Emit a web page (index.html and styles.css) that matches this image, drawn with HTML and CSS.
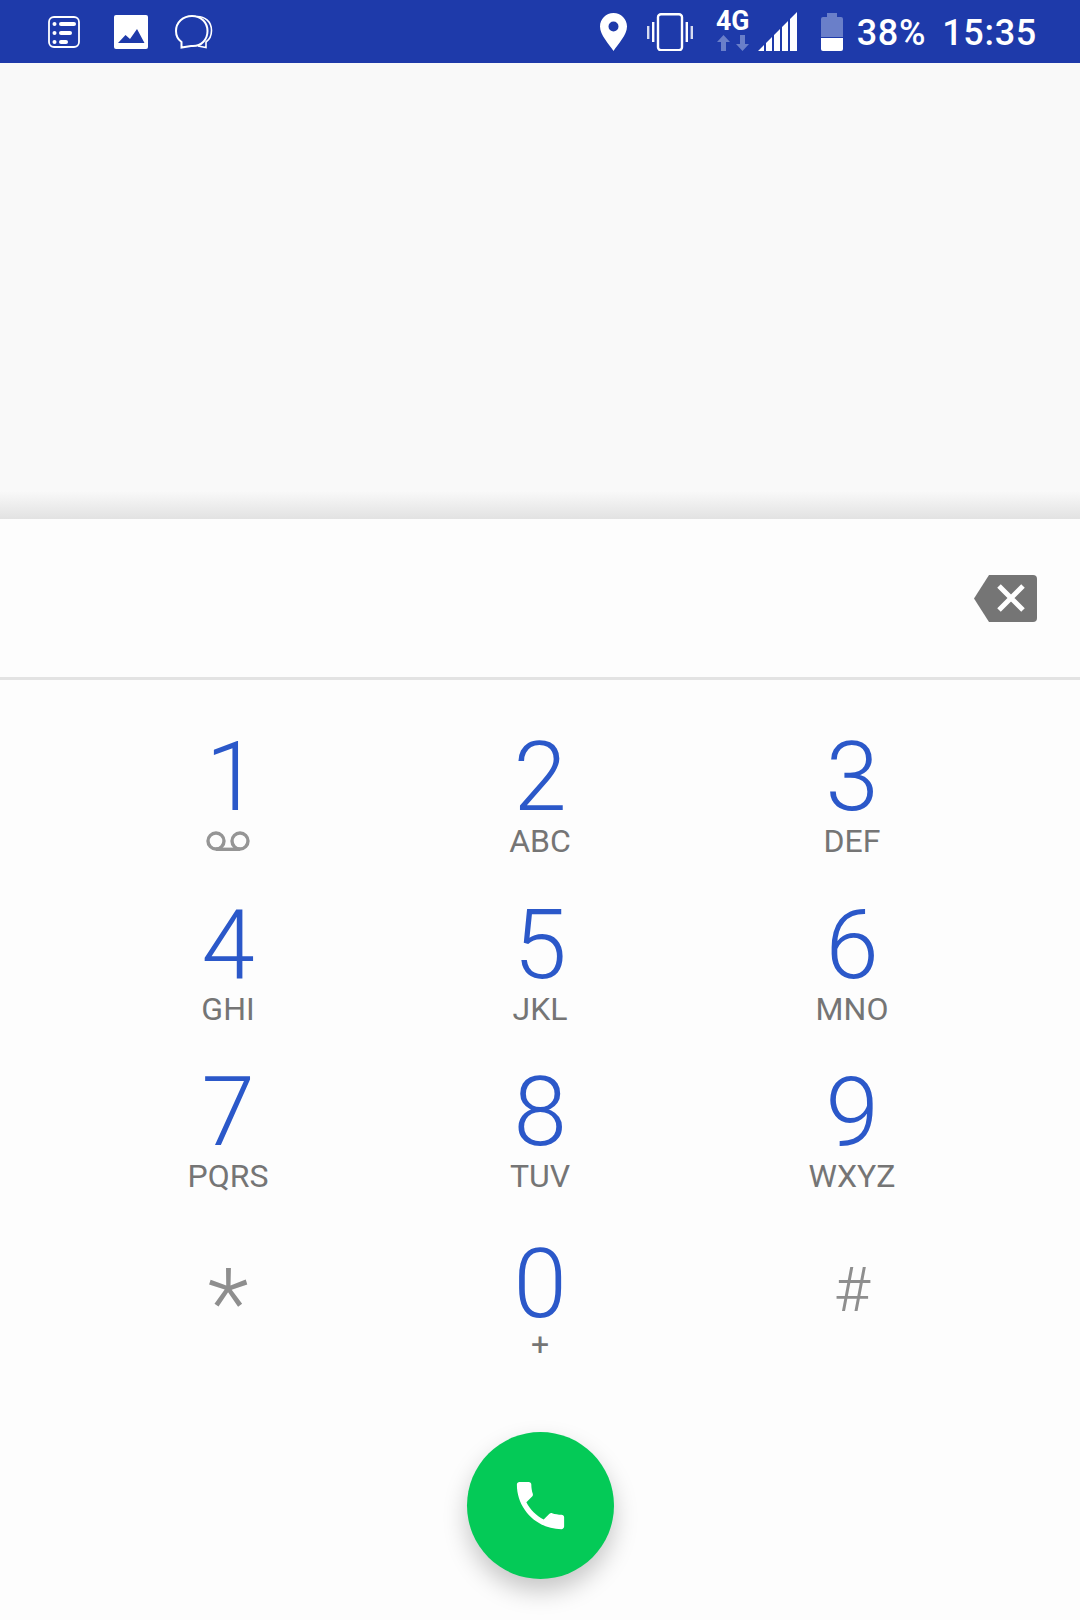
FILE: index.html
```html
<!DOCTYPE html>
<html lang="en">
<head>
<meta charset="utf-8">
<title>Dialer</title>
<link rel="stylesheet" href="styles.css">
</head>
<body>
<header class="status">
  <div class="status-left">
    <svg class="ic-list" viewBox="0 0 32 32" width="32" height="32"><rect x="1" y="1" width="30" height="30" rx="5" fill="none" stroke="#fff" stroke-width="1.8"/><circle cx="6.500" cy="8" r="2" fill="#fff"/><circle cx="6.500" cy="17" r="2" fill="#fff"/><circle cx="6.500" cy="26" r="2" fill="#fff"/><rect x="11" y="6" width="17" height="4" rx="2" fill="#fff"/><rect x="11" y="15" width="13" height="4" rx="2" fill="#fff"/><rect x="11" y="24" width="9" height="4" rx="2" fill="#fff"/></svg>
    <svg class="ic-image" viewBox="0 0 34 34" width="34" height="34"><path d="M2 0h30a2 2 0 0 1 2 2v30a2 2 0 0 1-2 2H2a2 2 0 0 1-2-2V2a2 2 0 0 1 2-2z" fill="#fff"/><path d="M4 28l7.500-8 4.500 4 7-10 7.500 14z" fill="#1e3aaa"/></svg>
    <svg class="ic-chat" viewBox="0 0 38 34" width="38" height="34"><path d="M22 1.500c8 0 14.500 5 14.500 14 0 5-2 9-5.500 11.500v5.500l-8-1.500" fill="none" stroke="#fff" stroke-width="1.600"/><path d="M17 1C8 1 1 7.500 1 16c0 4.500 2 8.500 5.500 11v5.500l9.500-1.500h2c8.500 0 14.500-6.500 14.500-15S26 1 17 1z" fill="#1e3aaa" stroke="#fff" stroke-width="2"/></svg>
  </div>
  <div class="status-right">
    <svg class="ic-pin" viewBox="0 0 27 38" width="27" height="38"><path fill-rule="evenodd" d="M13.500 0C6 0 0 6 0 13.500 0 22 9 31 13.500 38 18 31 27 22 27 13.500 27 6 21 0 13.500 0zm0 8.500a5 5 0 1 1 0 10 5 5 0 0 1 0-10z" fill="#fff"/></svg>
    <svg class="ic-vibrate" viewBox="0 0 46 38" width="46" height="38"><rect x="11" y="1.200" width="24" height="36" rx="3" fill="none" stroke="#fff" stroke-width="2.400"/><rect x="0" y="13" width="2.400" height="13" fill="#d7dcf0"/><rect x="5" y="9" width="2.400" height="20" fill="#fff"/><rect x="38.600" y="9" width="2.400" height="20" fill="#fff"/><rect x="43.600" y="13" width="2.400" height="13" fill="#d7dcf0"/></svg>
    <div class="net">
      <span class="net-label">4G</span>
      <svg viewBox="0 0 32 16" width="32" height="16"><path d="M6.500 0L13 7H9v9H4V7H0z" fill="#6a7fc9"/><path d="M25.500 16L32 9h-4V0h-5v9h-4z" fill="#6a7fc9"/></svg>
    </div>
    <svg class="ic-signal" viewBox="0 0 39 39" width="39" height="39"><path d="M0 39l6-6v6zM8 31l6-6v14H8zM16 23l6-6v22h-6zM24 15l6-6v30h-6zM32 7l7-7v39h-7z" fill="#fff"/></svg>
    <svg class="ic-battery" viewBox="0 0 22 38" width="22" height="38"><path d="M6 0h10v4h4a2 2 0 0 1 2 2v18H0V6a2 2 0 0 1 2-2h4z" fill="#6a7fc9"/><path d="M0 25h22v11a2 2 0 0 1-2 2H2a2 2 0 0 1-2-2z" fill="#fff"/></svg>
    <span class="pct">38%</span>
    <span class="clock">15:35</span>
  </div>
</header>

<section class="recents"></section>

<section class="display">
  <svg class="backspace" viewBox="0 0 63 47" width="63" height="47"><path d="M15 0h44a4 4 0 0 1 4 4v39a4 4 0 0 1-4 4H15L0 23.500z" fill="#757575"/><path d="M25 11l24 24M49 11L25 35" stroke="#fff" stroke-width="5" fill="none"/></svg>
</section>

<main class="keypad">
  <div class="key"><span class="digit one">1</span><svg class="vm" viewBox="0 0 44 20" width="44" height="20"><circle cx="10" cy="10" r="8" fill="none" stroke="#959595" stroke-width="3.400"/><circle cx="34" cy="10" r="8" fill="none" stroke="#959595" stroke-width="3.400"/><path d="M10 18.300h24" stroke="#959595" stroke-width="3.400"/></svg></div>
  <div class="key"><span class="digit">2</span><span class="letters">ABC</span></div>
  <div class="key"><span class="digit">3</span><span class="letters">DEF</span></div>
  <div class="key"><span class="digit">4</span><span class="letters">GHI</span></div>
  <div class="key"><span class="digit">5</span><span class="letters">JKL</span></div>
  <div class="key"><span class="digit">6</span><span class="letters">MNO</span></div>
  <div class="key"><span class="digit">7</span><span class="letters">PQRS</span></div>
  <div class="key"><span class="digit">8</span><span class="letters">TUV</span></div>
  <div class="key"><span class="digit">9</span><span class="letters">WXYZ</span></div>
  <div class="key"><span class="digit symbol star">*</span></div>
  <div class="key zero"><span class="digit">0</span><span class="letters">+</span></div>
  <div class="key"><span class="digit symbol hash">#</span></div>
</main>

<div class="fab-row">
  <button class="fab" type="button" aria-label="Call">
    <svg viewBox="0 0 24 24" width="63" height="63"><path d="M6.620 10.790c1.440 2.830 3.760 5.140 6.590 6.590l2.200-2.200c.27-.27.67-.36 1.020-.24 1.120.37 2.330.57 3.570.57.55 0 1 .45 1 1V20c0 .55-.45 1-1 1-9.390 0-17-7.610-17-17 0-.55.45-1 1-1h3.500c.55 0 1 .45 1 1 0 1.250.2 2.450.57 3.570.11.35.03.74-.25 1.020l-2.200 2.200z" fill="#fff"/></svg>
  </button>
</div>
</body>
</html>
```
FILE: styles.css
```css
* { box-sizing: border-box; }
html, body { margin: 0; padding: 0; }
html { height: 1620px; overflow: hidden; }
body {
  width: 1080px;
  height: 1620px;
  overflow: hidden;
  background: #fdfdfd;
  font-family: Roboto, "Liberation Sans", sans-serif;
  display: flex;
  flex-direction: column;
}
.status {
  flex: none;
  height: 63px;
  background: #1e3aaa;
  color: #fff;
  display: flex;
  justify-content: space-between;
  align-items: center;
  padding: 0 43px 0 48px;
}
.status-left, .status-right { display: flex; align-items: center; }
.status svg { display: block; flex: none; }
.ic-image { margin-left: 34px; }
.ic-chat { margin-left: 27px; }
.ic-vibrate { margin-left: 20px; }
.net {
  margin-left: 23px;
  width: 34px;
  height: 48px;
  display: flex;
  flex-direction: column;
  align-items: center;
}
.net-label {
  font-size: 28px;
  line-height: 24px;
  height: 26px;
  font-weight: 700;
  transform: scaleX(0.95);
  margin-top: 1px;
}
.ic-signal { margin-left: 8px; }
.ic-battery { margin-left: 24px; }
.pct, .clock { font-size: 36px; line-height: 40px; margin-top: 2px; font-weight: 500; }
.pct { margin-left: 14px; letter-spacing: 0.7px; }
.clock { margin-left: 16px; letter-spacing: 0.7px; }
.recents {
  flex: none;
  height: 456px;
  background: linear-gradient(to bottom, #f9f9f9 0, #f9f9f9 428px, #e2e2e2 100%);
}
.display {
  flex: none;
  height: 161px;
  border-bottom: 3px solid #e3e3e3;
  display: flex;
  justify-content: flex-end;
  align-items: flex-start;
  padding: 56px 43px 0 0;
}
.keypad {
  flex: none;
  padding: 0 72px;
  display: grid;
  grid-template-columns: repeat(3, 312px);
  grid-auto-rows: 167.5px;
  margin-top: 51px;
}
.key {
  display: flex;
  flex-direction: column;
  align-items: center;
}
.digit {
  font-size: 96px;
  font-weight: 300;
  line-height: 92px;
  color: #2b58c9;
}
.one { margin-left: 8px; }
.letters {
  font-size: 32px;
  line-height: 36px;
  color: #757575;
}
.zero .digit { line-height: 84px; margin-top: 8px; }
.vm { display: block; margin-top: 8px; }
.symbol { color: #8e8e8e; }
.star { margin-top: 24px; }
.hash { font-size: 62px; margin-top: 10px; }
.fab-row {
  flex: none;
  display: flex;
  justify-content: center;
  margin-top: 31px;
}
.fab {
  width: 147px;
  height: 147px;
  border: 0;
  padding: 0;
  border-radius: 50%;
  background: #04ca57;
  box-shadow: 0 12px 24px rgba(0,0,0,.22);
  display: flex;
  align-items: center;
  justify-content: center;
}
```
